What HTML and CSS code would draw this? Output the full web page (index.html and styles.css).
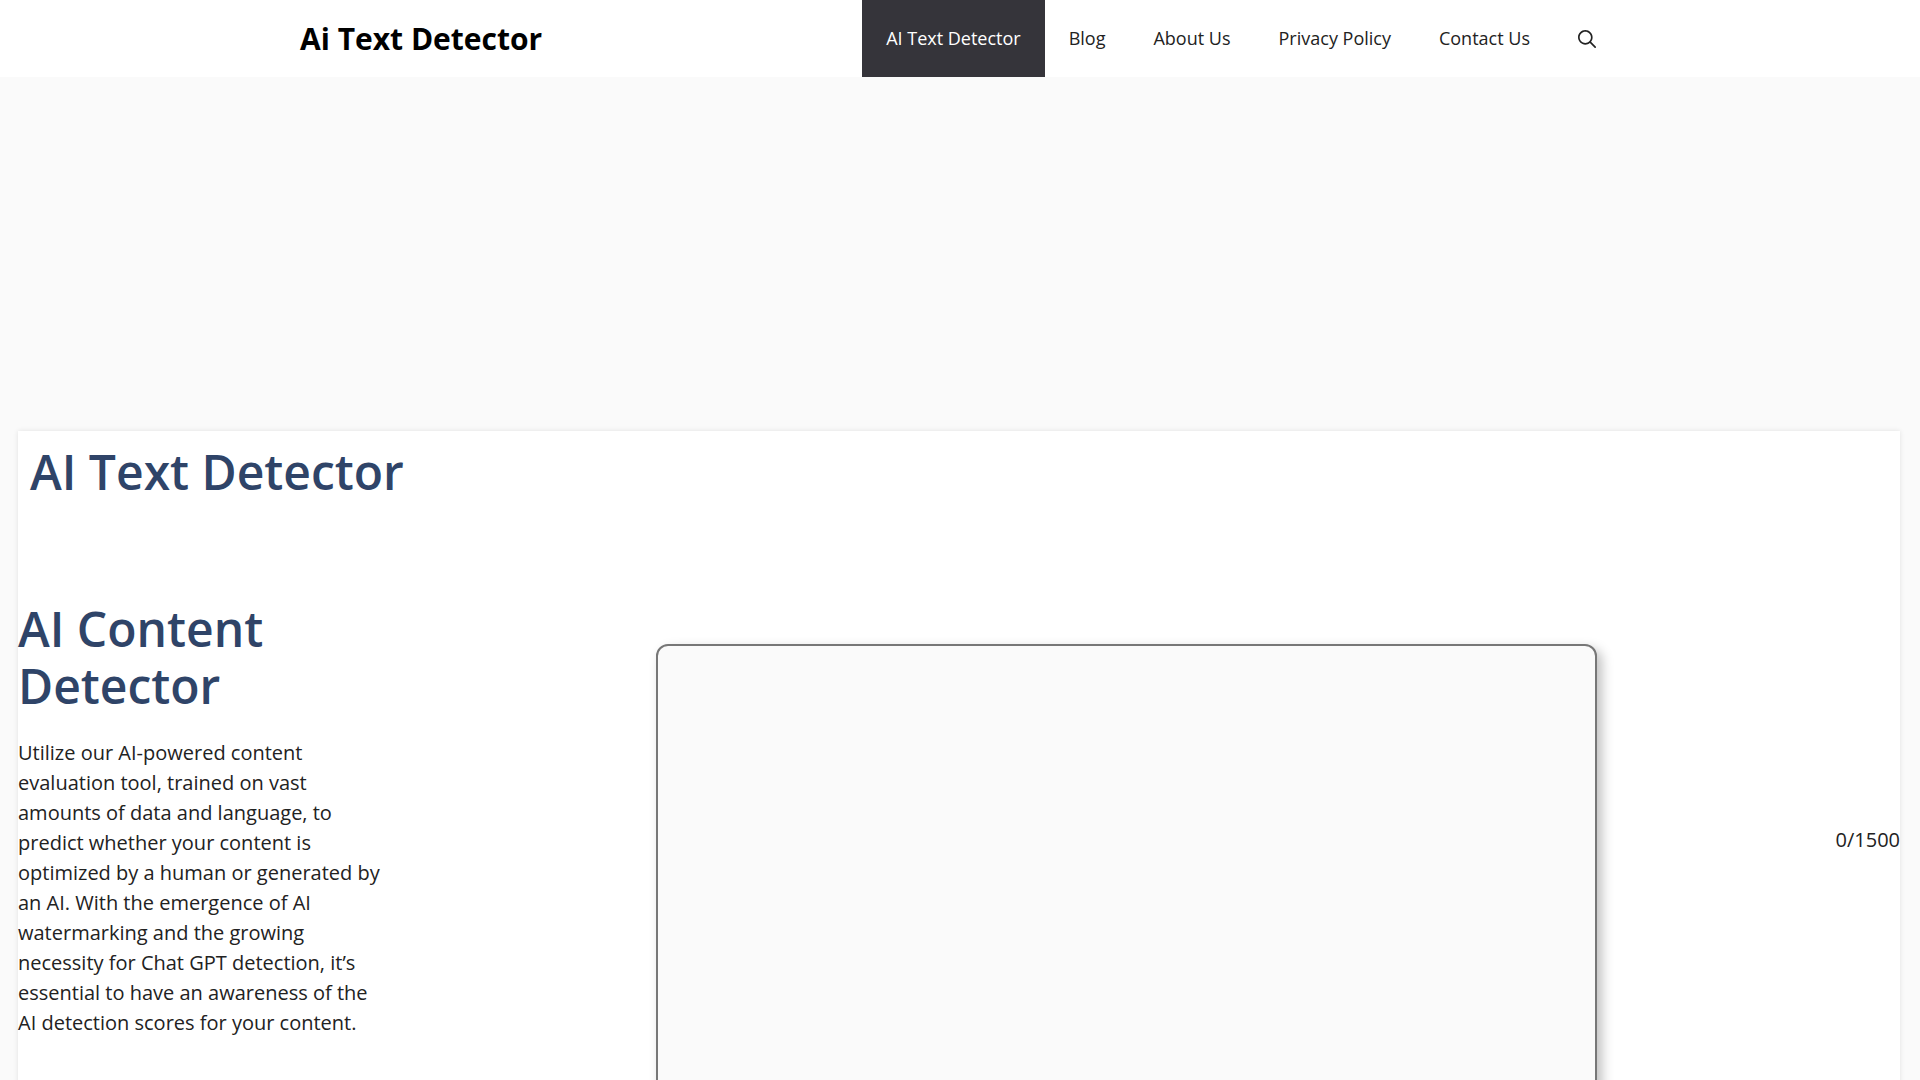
FILE: index.html
```
<!DOCTYPE html>
<html lang="en">
<head>
  <meta charset="UTF-8">
  <meta name="viewport" content="width=device-width, initial-scale=1.0">
  <title>Ai Text Detector</title>
  <link rel="stylesheet" href="styles.css">
</head>
<body>

<header class="site-header">
  <div class="inside-header">
    <a class="site-title" href="#">Ai Text Detector</a>
    <nav class="main-nav">
      <a class="current" href="#">AI Text Detector</a>
      <a href="#">Blog</a>
      <a href="#">About Us</a>
      <a href="#">Privacy Policy</a>
      <a href="#">Contact Us</a>
      <button class="search-toggle" type="button" aria-label="Open search">
        <svg viewBox="0 0 512 512" aria-hidden="true"><path fill-rule="evenodd" clip-rule="evenodd" d="M208 48c-88.366 0-160 71.634-160 160s71.634 160 160 160 160-71.634 160-160S296.366 48 208 48zM0 208C0 93.125 93.125 0 208 0s208 93.125 208 208c0 48.741-16.765 93.566-44.843 129.024l133.826 134.018c9.366 9.379 9.355 24.575-.025 33.941-9.379 9.366-24.575 9.355-33.941-.025L337.238 370.987C301.747 399.167 256.839 416 208 416 93.125 416 0 322.875 0 208z"/></svg>
      </button>
    </nav>
  </div>
</header>

<!-- Banner area above the content -->
<div class="banner"></div>

<main class="content">
  <h1 class="entry-title">AI Text Detector</h1>

  <div class="detector">
    <div class="intro">
      <h2>AI Content Detector</h2>
      <p>Utilize our AI-powered content evaluation tool, trained on vast amounts of data and language, to predict whether your content is optimized by a human or generated by an AI. With the emergence of AI watermarking and the growing necessity for Chat GPT detection, it’s essential to have an awareness of the AI detection scores for your content.</p>
    </div>
    <textarea id="detector-text" class="detector-text" maxlength="1500" aria-label="Text to check"></textarea>
    <output class="counter" for="detector-text">0/1500</output>
  </div>
</main>

<script>
  // Keep the character counter in step with the text box
  const box = document.getElementById('detector-text');
  box.addEventListener('input', () => {
    document.querySelector('.counter').textContent = box.value.length + '/1500';
  });
</script>
</body>
</html>
```
FILE: styles.css
```
* {
  box-sizing: border-box;
}

body {
  margin: 0;
  font-family: "Open Sans", sans-serif;
  font-size: 20px;
  line-height: 30px;
  color: #222;
  background-color: #fafafa;
}

h1, h2 {
  margin: 0;
  font-size: 48px;
  line-height: 57px;
  font-weight: 600;
  color: #2f4468;
}

/* Header */
.site-header {
  background-color: #fff;
}

.inside-header {
  display: flex;
  justify-content: space-between;
  align-items: center;
  max-width: 1320px;
  margin: 0 auto;
}

.site-title {
  font-size: 30px;
  font-weight: 700;
  color: #000;
  text-decoration: none;
}

.main-nav {
  display: flex;
}

.main-nav a,
.search-toggle {
  padding: 0 24px;
  font-size: 18px;
  line-height: 77px;
  color: #222;
  text-decoration: none;
}

.main-nav .current {
  background-color: #35343a;
  color: #fff;
}

.search-toggle {
  display: flex;
  align-items: center;
  border: none;
  background: none;
  cursor: pointer;
}

.search-toggle svg {
  width: 18px;
  height: 18px;
  fill: currentColor;
}

.banner {
  height: 354px;
}

/* Content card */
.content {
  margin: 0 20px 24px 18px;
  background-color: #fff;
  box-shadow: 0 0 5px rgba(0, 0, 0, 0.1);
}

.entry-title {
  padding: 12px 12px 56px;
}

.detector {
  display: flex;
  justify-content: space-between;
  align-items: center;
}

.intro {
  width: 20%;
}

.intro h2 {
  margin-bottom: 24px;
}

.intro p {
  margin: 0 8px 42px 0;
}

.detector-text {
  width: 50%;
  height: 480px;
  margin: 88px 0 0 24px;
  padding: 12px;
  border: 2px solid #777;
  border-radius: 12px;
  background-color: #fafafa;
  box-shadow: 5px 5px 12px rgba(0, 0, 0, 0.25);
  font: inherit;
  color: inherit;
  resize: none;
}
```
